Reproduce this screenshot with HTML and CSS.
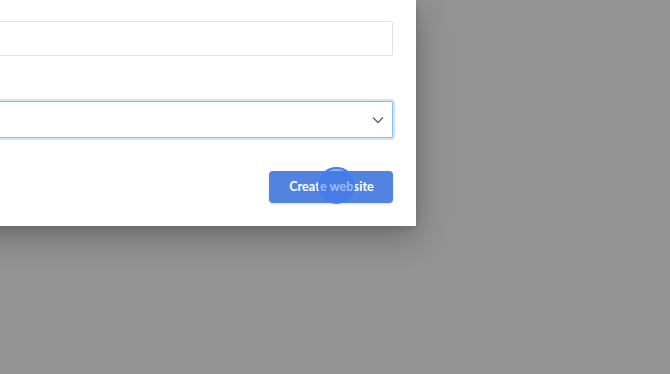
FILE: index.html
```html
<!DOCTYPE html>
<html>
<head>
<meta charset="utf-8">
<link rel="stylesheet" href="styles.css">
</head>
<body>
<div class="modal">
  <div class="field text-field"></div>
  <div class="field select-field">
    <svg class="chevron" width="12" height="8" viewBox="0 0 12 8"><path d="M1 1.5 L6 6.5 L11 1.5" fill="none" stroke="#666" stroke-width="1.4"/></svg>
  </div>
  <div class="actions">
    <button class="btn">Create website<span class="ripple"></span></button>
  </div>
</div>
</body>
</html>
```
FILE: styles.css
```css
html, body {
  margin: 0;
  padding: 0;
}
body {
  background: #939393;
  width: 670px;
  height: 374px;
  overflow: hidden;
  font-family: "Lato", "Liberation Sans", sans-serif;
}
.modal {
  width: 500px;
  height: 226px;
  margin-left: -84px;
  background: #fff;
  box-sizing: border-box;
  padding: 21px 23px 0 0;
  box-shadow: 0 10px 30px rgba(0,0,0,0.28), 0 2px 6px rgba(0,0,0,0.12);
  display: flex;
  flex-direction: column;
}
.field {
  box-sizing: border-box;
  background: #fff;
  border-radius: 2px;
}
.text-field {
  height: 35px;
  border: 1px solid #e2e2e2;
}
.select-field {
  margin-top: 45px;
  height: 37px;
  border: 1px solid #86bdee;
  box-shadow: 0 0 0 2px rgba(150,198,240,0.45);
  display: flex;
  align-items: center;
  justify-content: flex-end;
  padding-right: 8px;
}
.chevron {
  display: block;
}
.actions {
  margin-top: 33px;
  display: flex;
  justify-content: flex-end;
}
.btn {
  position: relative;
  width: 124px;
  height: 32px;
  border: none;
  border-radius: 4px;
  background: #5383e0;
  color: #fff;
  font-family: "Lato", "Liberation Sans", sans-serif;
  font-weight: 700;
  font-size: 12.6px;
  letter-spacing: 0.05px;
  padding: 0 0 1px 1px;
  box-shadow: 0 1px 3px rgba(0,0,0,0.15);
}
.ripple {
  position: absolute;
  left: 49px;
  top: -4px;
  width: 37px;
  height: 37px;
  border-radius: 50%;
  box-sizing: border-box;
  background: rgba(58,118,238,0.5);
  border: 2px solid #3f80f2;
}
```
